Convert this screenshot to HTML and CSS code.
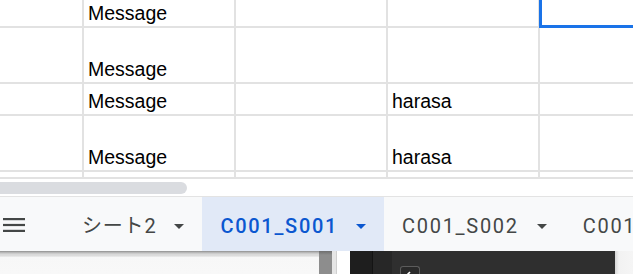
FILE: index.html
```html
<!DOCTYPE html>
<html lang="ja">
<head>
<meta charset="utf-8">
<title>Sheet</title>
<link rel="stylesheet" href="styles.css">
</head>
<body>
<div class="sheet">
  <div class="grid">
    <div class="cell"></div>
    <div class="cell"><span class="val">Message</span></div>
    <div class="cell"></div>
    <div class="cell"></div>
    <div class="cell sel-host"><div class="selection"></div></div>

    <div class="cell"></div>
    <div class="cell"><span class="val">Message</span></div>
    <div class="cell"></div>
    <div class="cell"></div>
    <div class="cell"></div>

    <div class="cell"></div>
    <div class="cell"><span class="val">Message</span></div>
    <div class="cell"></div>
    <div class="cell"><span class="val">harasa</span></div>
    <div class="cell"></div>

    <div class="cell"></div>
    <div class="cell"><span class="val">Message</span></div>
    <div class="cell"></div>
    <div class="cell"><span class="val">harasa</span></div>
    <div class="cell"></div>

    <div class="cell"></div>
    <div class="cell"></div>
    <div class="cell"></div>
    <div class="cell"></div>
    <div class="cell"></div>
  </div>

  <div class="hscroll"><div class="thumb"></div></div>

  <div class="tabbar">
    <div class="menu">
      <svg class="menu-icon" width="22" height="14" viewBox="0 0 22 14">
        <rect x="0" y="0" width="22" height="2.2" fill="#444746"/>
        <rect x="0" y="5.9" width="22" height="2.2" fill="#444746"/>
        <rect x="0" y="11.8" width="22" height="2.2" fill="#444746"/>
      </svg>
    </div>
    <div class="tab">
      <span class="tab-label jp">シート2</span>
      <svg class="caret" width="10" height="5" viewBox="0 0 10 5"><path d="M0 0 H10 L5 5 Z" fill="#444746"/></svg>
    </div>
    <div class="tab active">
      <span class="tab-label">C001_S001</span>
      <svg class="caret" width="10" height="5" viewBox="0 0 10 5"><path d="M0 0 H10 L5 5 Z" fill="#0b57d0"/></svg>
    </div>
    <div class="tab">
      <span class="tab-label">C001_S002</span>
      <svg class="caret" width="10" height="5" viewBox="0 0 10 5"><path d="M0 0 H10 L5 5 Z" fill="#444746"/></svg>
    </div>
    <div class="tab">
      <span class="tab-label">C001_S003</span>
      <svg class="caret" width="10" height="5" viewBox="0 0 10 5"><path d="M0 0 H10 L5 5 Z" fill="#444746"/></svg>
    </div>
  </div>

  <div class="below">
    <div class="pane-light"></div>
    <div class="pane-grey"></div>
    <div class="pane-gap"></div>
    <div class="pane-dark">
      <div class="dk1"></div>
      <div class="dk2"></div>
      <div class="dk3"><div class="chk"><svg width="18" height="10" viewBox="0 0 18 10"><path d="M6 8 L9 5" stroke="#ffffff" stroke-width="1.6" fill="none"/></svg></div></div>
    </div>
    <div class="pane-right"></div>
  </div>
</div>
</body>
</html>
```

FILE: styles.css
```css
html, body {
  margin: 0;
  padding: 0;
  background: #ffffff;
}
body {
  width: 633px;
  height: 274px;
  overflow: hidden;
}
.sheet {
  width: 633px;
  height: 274px;
  display: flex;
  flex-direction: column;
  overflow: hidden;
}

/* grid */
.grid {
  display: grid;
  grid-template-columns: 82px 150px 150px 150px 1fr;
  grid-template-rows: 26px 54px 30px 54px 5px;
  gap: 2px;
  background: #e2e2e2;
  border-bottom: 2px solid #e2e2e2;
  flex: none;
}
.cell {
  background: #ffffff;
  display: flex;
  align-items: flex-end;
  padding: 0 4px 3px;
  overflow: hidden;
  min-width: 0;
}
.val {
  font-family: "Liberation Sans", Arial, sans-serif;
  font-size: 19.5px;
  line-height: 1;
  color: #000000;
  white-space: nowrap;
}
.sel-host {
  position: relative;
  overflow: visible;
}
.selection {
  position: absolute;
  left: -1px;
  bottom: -2px;
  top: -10px;
  right: -10px;
  border: 3px solid #1a73e8;
}

/* horizontal scrollbar */
.hscroll {
  height: 17px;
  flex: none;
  background: #ffffff;
  padding-top: 3px;
  box-sizing: border-box;
}
.thumb {
  margin-left: -8px;
  width: 195px;
  height: 12px;
  border-radius: 6px;
  background: #dadce0;
}

/* sheet tabs */
.tabbar {
  flex: none;
  height: 54px;
  border-top: 1px solid #e3e3e3;
  background: #f8f9fa;
  display: flex;
  align-items: stretch;
  white-space: nowrap;
}
.menu {
  width: 64px;
  flex: none;
  display: flex;
  align-items: center;
  padding-top: 2px;
  box-sizing: border-box;
}
.menu-icon {
  margin-left: 3px;
  display: block;
}
.tab {
  flex: none;
  display: flex;
  align-items: center;
  gap: 18px;
  padding: 4px 18px 0;
  box-sizing: border-box;
}
.tab-label {
  font-family: Roboto, "Noto Sans CJK JP", sans-serif;
  font-size: 20px;
  line-height: 1;
  letter-spacing: 1.7px;
  color: #444746;
}
.tab-label.jp {
  letter-spacing: 0.8px;
}
.tab.active {
  background: #e1e9f7;
}
.tab.active .tab-label {
  color: #0b57d0;
  font-weight: 500;
}
.caret {
  display: block;
  flex: none;
}

/* area below the tab bar */
.below {
  flex: 1;
  display: flex;
  min-height: 0;
}
.pane-light {
  width: 319px;
  flex: none;
  background: linear-gradient(to bottom, #8e8e8e 0, #c4c4c4 2px, #e0e0e0 4px, #d8d8d8 5px, #f7f7f7 6px, #f8f8f8 100%);
}
.pane-grey {
  width: 13px;
  flex: none;
  background: linear-gradient(to bottom, #6e6e6e 0, #8d8d8d 4px, #8d8d8d 100%);
}
.pane-gap {
  width: 18px;
  flex: none;
  background: linear-gradient(to right, #e6e6e6 0, #e6e6e6 4px, #d0d0d0 4px, #d0d0d0 5px, #ffffff 5px);
}
.pane-dark {
  width: 265px;
  flex: none;
  display: flex;
  background: #2f2f2f;
}
.dk1 {
  width: 22px;
  background: #1e1e1e;
  border-right: 1px solid #141414;
}
.dk2 {
  width: 19px;
  background: #272727;
}
.dk3 {
  flex: 1;
  padding: 15px 0 0 8px;
}
.chk {
  width: 18px;
  height: 12px;
  border: 1px solid #5c5c5c;
  border-bottom: none;
  border-radius: 3px 3px 0 0;
  background: #2a2a2a;
}
.chk svg {
  display: block;
}
.pane-right {
  flex: 1;
  background: linear-gradient(to right, #d6d6d6 0, #f2f2f2 4px, #f5f5f5 100%);
}
```
